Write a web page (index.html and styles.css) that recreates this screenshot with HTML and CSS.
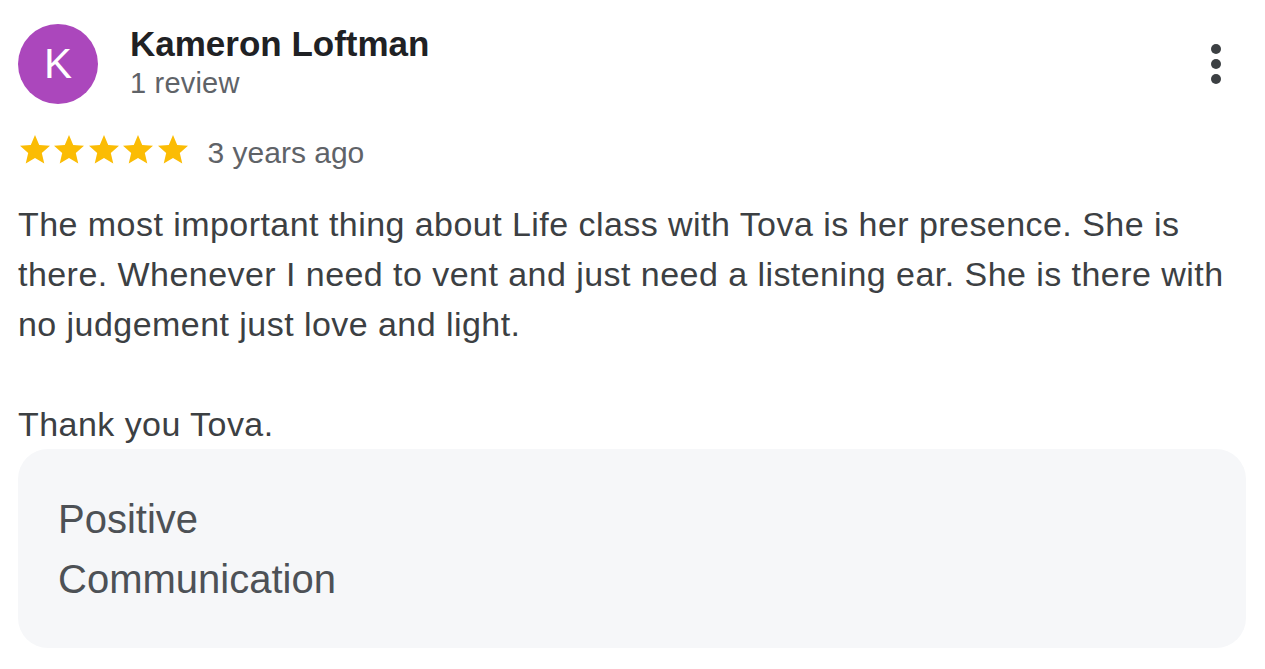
FILE: index.html
```html
<!DOCTYPE html>
<html lang="en">
<head>
<meta charset="utf-8">
<title>Review</title>
<link rel="stylesheet" href="styles.css">
</head>
<body>
<div class="review">
  <div class="header">
    <div class="avatar">K</div>
    <div class="meta">
      <div class="name">Kameron Loftman</div>
      <div class="count">1 review</div>
    </div>
    <button class="menu" aria-label="More options">
      <span class="dot"></span><span class="dot"></span><span class="dot"></span>
    </button>
  </div>
  <div class="rating">
    <div class="stars">
      <svg class="star" viewBox="0 0 24 24"><path d="M12 17.27L18.18 21l-1.64-7.03L22 9.24l-7.19-.61L12 2 9.19 8.63 2 9.24l5.46 4.730L5.82 21z"/></svg>
      <svg class="star" viewBox="0 0 24 24"><path d="M12 17.27L18.18 21l-1.64-7.03L22 9.24l-7.19-.61L12 2 9.19 8.63 2 9.24l5.46 4.73L5.82 21z"/></svg>
      <svg class="star" viewBox="0 0 24 24"><path d="M12 17.27L18.18 21l-1.64-7.03L22 9.24l-7.19-.61L12 2 9.19 8.63 2 9.24l5.46 4.73L5.82 21z"/></svg>
      <svg class="star" viewBox="0 0 24 24"><path d="M12 17.27L18.18 21l-1.64-7.03L22 9.24l-7.19-.61L12 2 9.19 8.63 2 9.24l5.46 4.73L5.82 21z"/></svg>
      <svg class="star" viewBox="0 0 24 24"><path d="M12 17.27L18.18 21l-1.64-7.03L22 9.24l-7.19-.61L12 2 9.19 8.63 2 9.24l5.46 4.73L5.82 21z"/></svg>
    </div>
    <span class="date">3 years ago</span>
  </div>
  <p class="text">The most important thing about Life class with Tova is her presence. She is there. Whenever I need to vent and just need a listening ear. She is there with no judgement just love and light.<br><br>Thank you Tova.</p>
  <div class="tags">
    <div class="tag">Positive</div>
    <div class="tag">Communication</div>
  </div>
</div>
</body>
</html>
```
FILE: styles.css
```css
* { box-sizing: border-box; }
html, body { margin: 0; padding: 0; background: #fff; }
body { font-family: "Liberation Sans", Arial, sans-serif; }

.review {
  padding: 24px 19px 0 18px;
}

.header {
  display: flex;
  align-items: flex-start;
}

.avatar {
  width: 80px;
  height: 80px;
  border-radius: 50%;
  background: #ab47bc;
  color: #fff;
  font-size: 42px;
  line-height: 80px;
  text-align: center;
  flex: none;
}

.meta {
  margin-left: 32px;
  flex: 1;
}

.name {
  font-size: 35px;
  font-weight: bold;
  line-height: 40px;
  color: #202124;
}

.count {
  font-size: 29px;
  line-height: 38px;
  color: #5f6368;
  letter-spacing: 0.2px;
}

.menu {
  border: 0;
  background: none;
  padding: 0;
  margin: 20px 25px 0 0;
  display: flex;
  flex-direction: column;
  gap: 5px;
}

.dot {
  display: block;
  width: 10px;
  height: 10px;
  border-radius: 50%;
  background: #3c4043;
}

.rating {
  display: flex;
  align-items: center;
  margin-top: 26px;
  height: 40px;
}

.stars {
  display: flex;
}

.star {
  width: 36px;
  height: 36px;
  fill: #fbbc04;
  display: block;
  margin-left: -1.5px;
}

.date {
  margin-left: 17px;
  font-size: 30px;
  line-height: 40px;
  color: #5f6368;
  padding-top: 5px;
}

.text {
  margin: 29px 0 0 0;
  font-size: 34px;
  letter-spacing: 0.45px;
  line-height: 50px;
  color: #3c4043;
}

.tags {
  background: #f6f7f9;
  border-radius: 30px;
  padding: 40px 40px 39px;
  margin-top: 0;
}

.tag {
  font-size: 40px;
  line-height: 60px;
  color: #4d5156;
}
```
